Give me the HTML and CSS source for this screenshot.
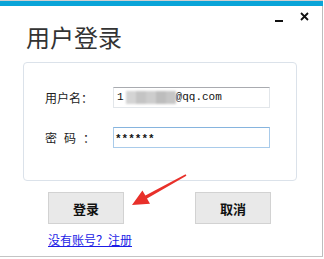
FILE: index.html
```html
<!DOCTYPE html>
<html lang="zh">
<head>
<meta charset="utf-8">
<title>用户登录</title>
<link rel="stylesheet" href="styles.css">
</head>
<body>
<div class="window">
  <div class="topline"></div>
  <div class="bluebar"></div>
  <div class="main">
    <header class="head">
      <h1 class="title">用户登录</h1>
      <div class="controls">
        <span class="min"></span>
        <svg class="close" width="9" height="9" viewBox="0 0 9 9"><path d="M1 1 L8 8 M8 1 L1 8" stroke="#111" stroke-width="1.8" fill="none"/></svg>
      </div>
    </header>
    <div class="panel">
      <div class="row">
        <span class="label">用户名：</span>
        <div class="input">
          <span class="val">1</span><span class="blur"><i class="b1"></i><i class="b2"></i><i class="b3"></i><i class="b4"></i><i class="b5"></i></span><span class="val">@qq.com</span>
        </div>
      </div>
      <div class="row">
        <span class="label spaced">密码：</span>
        <div class="input focus"><span class="pw">******</span></div>
      </div>
    </div>
    <div class="buttons">
      <button class="btn">登录</button>
      <button class="btn">取消</button>
    </div>
    <a class="reg" href="#">没有账号？注册</a>
  </div>
  <svg class="arrow" width="324" height="259" viewBox="0 0 324 259">
    <polygon fill="#e8302a" points="185.6,174.3 145.4,195.6 142.4,190.4 132,205 150,203.8 147,198.6 186.4,175.7"/>
  </svg>
</div>
</body>
</html>
```

FILE: styles.css
```css
html, body {
  margin: 0;
  padding: 0;
  background: #ffffff;
}
body {
  font-family: "Noto Sans CJK SC", "Liberation Sans", sans-serif;
  color: #222;
}
.window {
  position: relative;
  width: 324px;
  height: 259px;
  overflow: hidden;
}
.topline {
  height: 1px;
  width: 323px;
  background: #cfcfcf;
}
.bluebar {
  height: 5px;
  width: 323px;
  background: #0aa4d8;
}
.main {
  width: 322px;
  height: 250px;
  border-right: 1px solid #bdbdbd;
  border-bottom: 1px solid #c4c4c4;
  display: flex;
  flex-direction: column;
}
.head {
  height: 56px;
  display: flex;
  justify-content: space-between;
  align-items: flex-start;
}
.title {
  margin: 0;
  padding: 19px 0 0 26px;
  font-size: 24px;
  line-height: 24px;
  font-weight: normal;
  color: #333;
}
.controls {
  display: flex;
  align-items: flex-start;
  padding: 6px 13px 0 0;
}
.min {
  display: block;
  width: 8px;
  height: 2px;
  margin-top: 8px;
  background: #111;
}
.close {
  display: block;
  margin-left: 17px;
}
.panel {
  margin-left: 23px;
  width: 272px;
  border: 1px solid #dbe2ea;
  border-radius: 4px;
  padding-top: 24px;
  box-sizing: content-box;
  height: 93px;
  display: flex;
  flex-direction: column;
  gap: 19px;
}
.row {
  display: flex;
  align-items: center;
  padding-left: 21px;
  height: 21px;
}
.label {
  width: 68px;
  font-size: 12px;
  line-height: 14px;
  color: #222;
}
.label.spaced {
  letter-spacing: 7px;
}
.input {
  box-sizing: border-box;
  width: 157px;
  height: 21px;
  border: 1px solid #e2e6ea;
  border-top-color: #a9abb0;
  display: flex;
  align-items: center;
  padding-left: 3px;
  font-family: "Liberation Mono", "DejaVu Sans Mono", monospace;
  font-size: 11px;
  color: #111;
}
.input.focus {
  border-color: #a9cbea;
  border-top-color: #86b4de;
  padding-left: 1px;
}
.val {
  line-height: 19px;
}
.blur {
  display: flex;
  height: 13px;
  margin: 0 0 0 2px;
  filter: blur(1px);
}
.blur i {
  display: block;
  height: 13px;
  width: 10px;
}
.b1 { background: #d4d4d4; }
.b2 { background: #c4c4c4; }
.b3 { background: #cdcdcd; }
.b4 { background: #bdbdbd; }
.b5 { background: #c6c6c6; }
.pw {
  font-weight: bold;
  font-size: 11px;
  line-height: 19px;
  padding-top: 3px;
}
.buttons {
  display: flex;
  gap: 71px;
  margin: 11px 0 0 48px;
}
.btn {
  width: 76px;
  height: 32px;
  margin: 0;
  padding: 0;
  background: #e9e9e9;
  border: 1px solid #d2d2d2;
  font-family: "Noto Sans CJK SC", sans-serif;
  font-size: 13px;
  font-weight: bold;
  color: #111;
}
.reg {
  margin: 9px 0 0 48px;
  font-size: 12px;
  line-height: 14px;
  color: #1c1ce6;
  text-decoration: underline;
  align-self: flex-start;
}
.arrow {
  position: absolute;
  left: 0;
  top: 0;
  pointer-events: none;
}
```
